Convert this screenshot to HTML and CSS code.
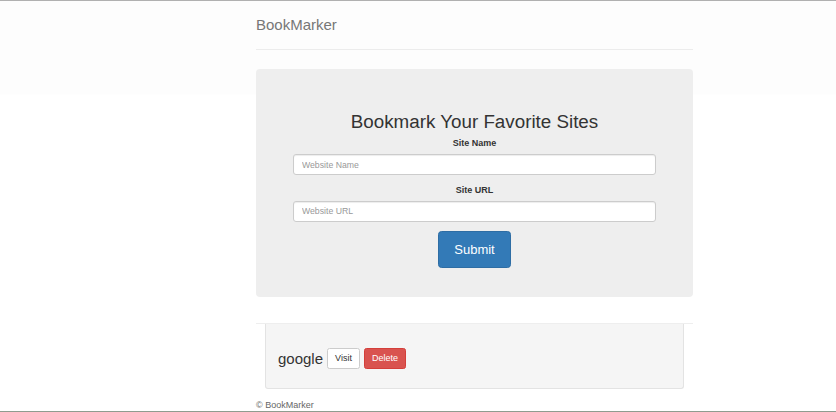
FILE: index.html
```
<!DOCTYPE html>
<html>
<head>
<meta charset="utf-8">
<title>BookMarker</title>
<link rel="stylesheet" href="styles.css">
</head>
<body>
<div class="page">
  <div class="container">
    <div class="header">
      <h3 class="brand">BookMarker</h3>
    </div>
    <div class="jumbotron">
      <h2 class="title">Bookmark Your Favorite Sites</h2>
      <form class="form">
        <div class="form-group">
          <label class="label">Site Name</label>
          <input class="input" type="text" placeholder="Website Name">
        </div>
        <div class="form-group">
          <label class="label">Site URL</label>
          <input class="input" type="text" placeholder="Website URL">
        </div>
        <button type="button" class="btn btn-primary btn-lg">Submit</button>
      </form>
    </div>
    <div class="results">
      <div class="well">
        <h3 class="site-name">google</h3>
        <a class="btn btn-default">Visit</a>
        <a class="btn btn-danger">Delete</a>
      </div>
    </div>
    <footer class="footer">© BookMarker</footer>
  </div>
</div>
</body>
</html>
```
FILE: styles.css
```
html, body {
  margin: 0;
  padding: 0;
}
body {
  font-family: "Liberation Sans", Arial, sans-serif;
  font-size: 8.7px;
  line-height: 1.43;
  color: #333;
  background: linear-gradient(#fdfdfd 0, #fdfdfd 94px, #fff 95px);
}
.page {
  height: 100vh;
  box-sizing: border-box;
  overflow: hidden;
  border-top: 1px solid #b0b0b0;
  border-bottom: 1px solid #8f9c8f;
}
.container {
  width: 437px;
  margin-left: 256px;
}
.header {
  padding: 16px 0 15px;
  border-bottom: 1px solid #ececec;
}
.brand {
  margin: 0;
  font-size: 15px;
  line-height: 1.1;
  font-weight: 400;
  color: #777;
}
.jumbotron {
  margin-top: 19px;
  height: 228px;
  box-sizing: border-box;
  padding: 43px 37px 0;
  background: #eee;
  border-radius: 4px;
  text-align: center;
}
.title {
  margin: 0 0 5px;
  font-size: 18.8px;
  line-height: 1.1;
  font-weight: 400;
  color: #333;
}
.form-group {
  margin-bottom: 9px;
}
.label {
  display: block;
  font-weight: 700;
  font-size: 9px;
  margin-bottom: 4px;
}
.input {
  display: block;
  width: 100%;
  height: 21px;
  box-sizing: border-box;
  padding: 0 8px;
  font-family: inherit;
  font-size: 8.7px;
  color: #555;
  background: #fff;
  border: 1px solid #ccc;
  border-radius: 3px;
  box-shadow: inset 0 1px 1px rgba(0,0,0,.075);
}
.input::placeholder {
  color: #999;
}
.btn {
  display: inline-block;
  box-sizing: border-box;
  font-family: inherit;
  text-align: center;
  vertical-align: middle;
  border: 1px solid transparent;
  border-radius: 2.5px;
  cursor: pointer;
}
.btn-lg {
  width: 73px;
  height: 37px;
  font-size: 13px;
  border-radius: 3.5px;
}
.btn-primary {
  color: #fff;
  background: #337ab7;
  border-color: #2e6da4;
}
.results {
  margin-top: 26px;
  border-top: 1px solid #eee;
  padding: 0 9px;
}
.well {
  height: 65px;
  box-sizing: border-box;
  background: #f5f5f5;
  border: 1px solid #e3e3e3;
  border-top: none;
  border-radius: 0 0 3px 3px;
  padding: 6px 12px 0;
  display: flex;
  align-items: center;
  gap: 4px;
}
.site-name {
  margin: 0;
  font-size: 15px;
  line-height: 21px;
  font-weight: 400;
  color: #333;
}
.btn-default,
.btn-danger {
  height: 21px;
  line-height: 19px;
  padding: 0 7px;
  font-size: 9px;
}
.btn-default {
  color: #333;
  background: #fff;
  border-color: #ccc;
}
.btn-danger {
  color: #fff;
  background: #d9534f;
  border-color: #d43f3a;
}
.footer {
  padding-top: 10px;
  font-size: 9px;
  color: #666;
}
```
